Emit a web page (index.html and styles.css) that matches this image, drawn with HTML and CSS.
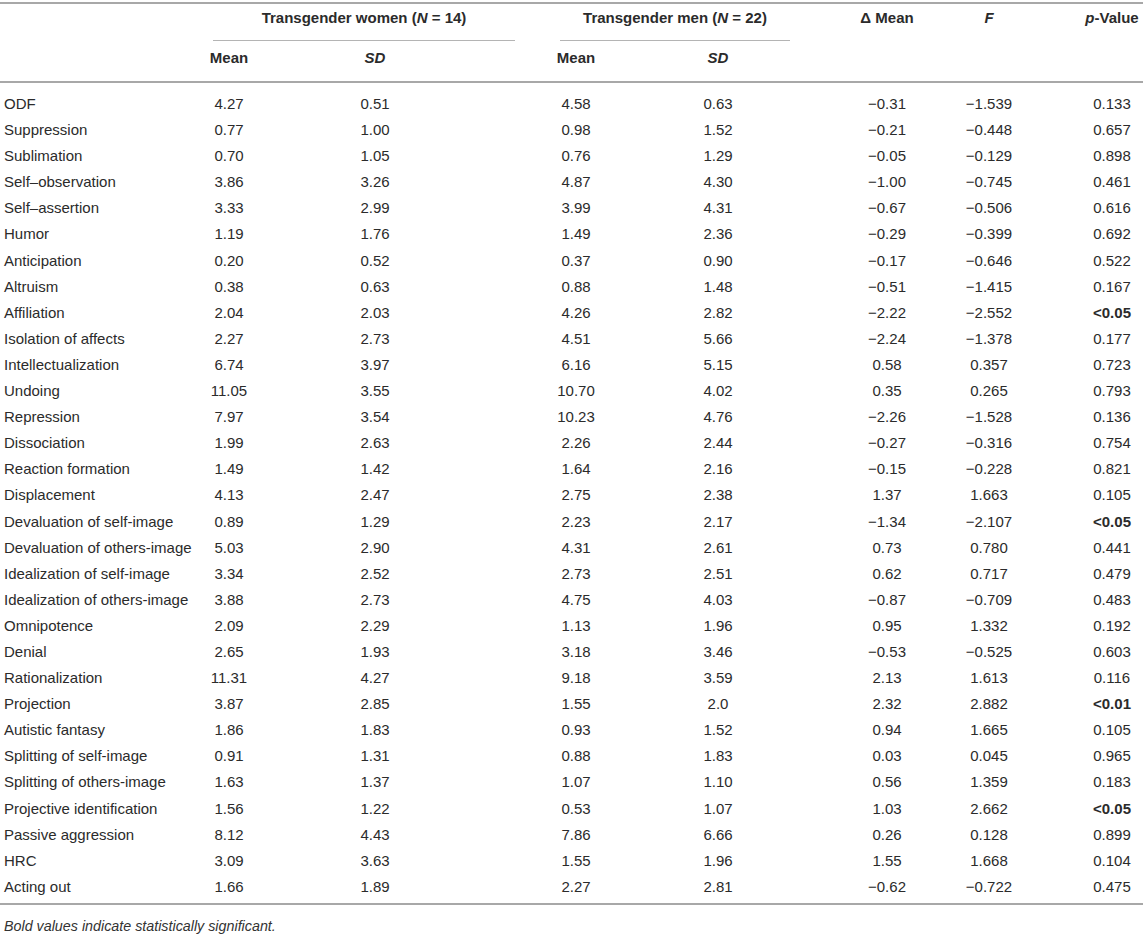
FILE: index.html
```html
<!DOCTYPE html>
<html lang="en">
<head>
<meta charset="utf-8">
<title>Defense mechanisms table</title>
<link rel="stylesheet" href="styles.css">
</head>
<body>
<div class="table">
  <div class="row head1">
    <div class="cell label"></div>
    <div class="cell grp grp-w">Transgender women (<i>N</i> = 14)</div>
    <div class="cell grp grp-m">Transgender men (<i>N</i> = 22)</div>
    <div class="cell c6">Δ Mean</div>
    <div class="cell c7"><i>F</i></div>
    <div class="cell c8"><i>p</i>-Value</div>
  </div>
  <div class="row head2">
    <div class="cell label"></div>
    <div class="cell c2">Mean</div>
    <div class="cell c3"><i>SD</i></div>
    <div class="cell c4">Mean</div>
    <div class="cell c5"><i>SD</i></div>
    <div class="cell c6"></div>
    <div class="cell c7"></div>
    <div class="cell c8"></div>
  </div>
  <div class="body">
    <div class="row"><div class="cell label">ODF</div><div class="cell c2">4.27</div><div class="cell c3">0.51</div><div class="cell c4">4.58</div><div class="cell c5">0.63</div><div class="cell c6">−0.31</div><div class="cell c7">−1.539</div><div class="cell c8">0.133</div></div>
    <div class="row"><div class="cell label">Suppression</div><div class="cell c2">0.77</div><div class="cell c3">1.00</div><div class="cell c4">0.98</div><div class="cell c5">1.52</div><div class="cell c6">−0.21</div><div class="cell c7">−0.448</div><div class="cell c8">0.657</div></div>
    <div class="row"><div class="cell label">Sublimation</div><div class="cell c2">0.70</div><div class="cell c3">1.05</div><div class="cell c4">0.76</div><div class="cell c5">1.29</div><div class="cell c6">−0.05</div><div class="cell c7">−0.129</div><div class="cell c8">0.898</div></div>
    <div class="row"><div class="cell label">Self–observation</div><div class="cell c2">3.86</div><div class="cell c3">3.26</div><div class="cell c4">4.87</div><div class="cell c5">4.30</div><div class="cell c6">−1.00</div><div class="cell c7">−0.745</div><div class="cell c8">0.461</div></div>
    <div class="row"><div class="cell label">Self–assertion</div><div class="cell c2">3.33</div><div class="cell c3">2.99</div><div class="cell c4">3.99</div><div class="cell c5">4.31</div><div class="cell c6">−0.67</div><div class="cell c7">−0.506</div><div class="cell c8">0.616</div></div>
    <div class="row"><div class="cell label">Humor</div><div class="cell c2">1.19</div><div class="cell c3">1.76</div><div class="cell c4">1.49</div><div class="cell c5">2.36</div><div class="cell c6">−0.29</div><div class="cell c7">−0.399</div><div class="cell c8">0.692</div></div>
    <div class="row"><div class="cell label">Anticipation</div><div class="cell c2">0.20</div><div class="cell c3">0.52</div><div class="cell c4">0.37</div><div class="cell c5">0.90</div><div class="cell c6">−0.17</div><div class="cell c7">−0.646</div><div class="cell c8">0.522</div></div>
    <div class="row"><div class="cell label">Altruism</div><div class="cell c2">0.38</div><div class="cell c3">0.63</div><div class="cell c4">0.88</div><div class="cell c5">1.48</div><div class="cell c6">−0.51</div><div class="cell c7">−1.415</div><div class="cell c8">0.167</div></div>
    <div class="row"><div class="cell label">Affiliation</div><div class="cell c2">2.04</div><div class="cell c3">2.03</div><div class="cell c4">4.26</div><div class="cell c5">2.82</div><div class="cell c6">−2.22</div><div class="cell c7">−2.552</div><div class="cell c8"><b>&lt;0.05</b></div></div>
    <div class="row"><div class="cell label">Isolation of affects</div><div class="cell c2">2.27</div><div class="cell c3">2.73</div><div class="cell c4">4.51</div><div class="cell c5">5.66</div><div class="cell c6">−2.24</div><div class="cell c7">−1.378</div><div class="cell c8">0.177</div></div>
    <div class="row"><div class="cell label">Intellectualization</div><div class="cell c2">6.74</div><div class="cell c3">3.97</div><div class="cell c4">6.16</div><div class="cell c5">5.15</div><div class="cell c6">0.58</div><div class="cell c7">0.357</div><div class="cell c8">0.723</div></div>
    <div class="row"><div class="cell label">Undoing</div><div class="cell c2">11.05</div><div class="cell c3">3.55</div><div class="cell c4">10.70</div><div class="cell c5">4.02</div><div class="cell c6">0.35</div><div class="cell c7">0.265</div><div class="cell c8">0.793</div></div>
    <div class="row"><div class="cell label">Repression</div><div class="cell c2">7.97</div><div class="cell c3">3.54</div><div class="cell c4">10.23</div><div class="cell c5">4.76</div><div class="cell c6">−2.26</div><div class="cell c7">−1.528</div><div class="cell c8">0.136</div></div>
    <div class="row"><div class="cell label">Dissociation</div><div class="cell c2">1.99</div><div class="cell c3">2.63</div><div class="cell c4">2.26</div><div class="cell c5">2.44</div><div class="cell c6">−0.27</div><div class="cell c7">−0.316</div><div class="cell c8">0.754</div></div>
    <div class="row"><div class="cell label">Reaction formation</div><div class="cell c2">1.49</div><div class="cell c3">1.42</div><div class="cell c4">1.64</div><div class="cell c5">2.16</div><div class="cell c6">−0.15</div><div class="cell c7">−0.228</div><div class="cell c8">0.821</div></div>
    <div class="row"><div class="cell label">Displacement</div><div class="cell c2">4.13</div><div class="cell c3">2.47</div><div class="cell c4">2.75</div><div class="cell c5">2.38</div><div class="cell c6">1.37</div><div class="cell c7">1.663</div><div class="cell c8">0.105</div></div>
    <div class="row"><div class="cell label">Devaluation of self-image</div><div class="cell c2">0.89</div><div class="cell c3">1.29</div><div class="cell c4">2.23</div><div class="cell c5">2.17</div><div class="cell c6">−1.34</div><div class="cell c7">−2.107</div><div class="cell c8"><b>&lt;0.05</b></div></div>
    <div class="row"><div class="cell label">Devaluation of others-image</div><div class="cell c2">5.03</div><div class="cell c3">2.90</div><div class="cell c4">4.31</div><div class="cell c5">2.61</div><div class="cell c6">0.73</div><div class="cell c7">0.780</div><div class="cell c8">0.441</div></div>
    <div class="row"><div class="cell label">Idealization of self-image</div><div class="cell c2">3.34</div><div class="cell c3">2.52</div><div class="cell c4">2.73</div><div class="cell c5">2.51</div><div class="cell c6">0.62</div><div class="cell c7">0.717</div><div class="cell c8">0.479</div></div>
    <div class="row"><div class="cell label">Idealization of others-image</div><div class="cell c2">3.88</div><div class="cell c3">2.73</div><div class="cell c4">4.75</div><div class="cell c5">4.03</div><div class="cell c6">−0.87</div><div class="cell c7">−0.709</div><div class="cell c8">0.483</div></div>
    <div class="row"><div class="cell label">Omnipotence</div><div class="cell c2">2.09</div><div class="cell c3">2.29</div><div class="cell c4">1.13</div><div class="cell c5">1.96</div><div class="cell c6">0.95</div><div class="cell c7">1.332</div><div class="cell c8">0.192</div></div>
    <div class="row"><div class="cell label">Denial</div><div class="cell c2">2.65</div><div class="cell c3">1.93</div><div class="cell c4">3.18</div><div class="cell c5">3.46</div><div class="cell c6">−0.53</div><div class="cell c7">−0.525</div><div class="cell c8">0.603</div></div>
    <div class="row"><div class="cell label">Rationalization</div><div class="cell c2">11.31</div><div class="cell c3">4.27</div><div class="cell c4">9.18</div><div class="cell c5">3.59</div><div class="cell c6">2.13</div><div class="cell c7">1.613</div><div class="cell c8">0.116</div></div>
    <div class="row"><div class="cell label">Projection</div><div class="cell c2">3.87</div><div class="cell c3">2.85</div><div class="cell c4">1.55</div><div class="cell c5">2.0</div><div class="cell c6">2.32</div><div class="cell c7">2.882</div><div class="cell c8"><b>&lt;0.01</b></div></div>
    <div class="row"><div class="cell label">Autistic fantasy</div><div class="cell c2">1.86</div><div class="cell c3">1.83</div><div class="cell c4">0.93</div><div class="cell c5">1.52</div><div class="cell c6">0.94</div><div class="cell c7">1.665</div><div class="cell c8">0.105</div></div>
    <div class="row"><div class="cell label">Splitting of self-image</div><div class="cell c2">0.91</div><div class="cell c3">1.31</div><div class="cell c4">0.88</div><div class="cell c5">1.83</div><div class="cell c6">0.03</div><div class="cell c7">0.045</div><div class="cell c8">0.965</div></div>
    <div class="row"><div class="cell label">Splitting of others-image</div><div class="cell c2">1.63</div><div class="cell c3">1.37</div><div class="cell c4">1.07</div><div class="cell c5">1.10</div><div class="cell c6">0.56</div><div class="cell c7">1.359</div><div class="cell c8">0.183</div></div>
    <div class="row"><div class="cell label">Projective identification</div><div class="cell c2">1.56</div><div class="cell c3">1.22</div><div class="cell c4">0.53</div><div class="cell c5">1.07</div><div class="cell c6">1.03</div><div class="cell c7">2.662</div><div class="cell c8"><b>&lt;0.05</b></div></div>
    <div class="row"><div class="cell label">Passive aggression</div><div class="cell c2">8.12</div><div class="cell c3">4.43</div><div class="cell c4">7.86</div><div class="cell c5">6.66</div><div class="cell c6">0.26</div><div class="cell c7">0.128</div><div class="cell c8">0.899</div></div>
    <div class="row"><div class="cell label">HRC</div><div class="cell c2">3.09</div><div class="cell c3">3.63</div><div class="cell c4">1.55</div><div class="cell c5">1.96</div><div class="cell c6">1.55</div><div class="cell c7">1.668</div><div class="cell c8">0.104</div></div>
    <div class="row"><div class="cell label">Acting out</div><div class="cell c2">1.66</div><div class="cell c3">1.89</div><div class="cell c4">2.27</div><div class="cell c5">2.81</div><div class="cell c6">−0.62</div><div class="cell c7">−0.722</div><div class="cell c8">0.475</div></div>
  </div>
</div>
<p class="note">Bold values indicate statistically significant.</p>
</body>
</html>
```
FILE: styles.css
```css
html, body {
  margin: 0;
  padding: 0;
  background: #ffffff;
}
body {
  padding-top: 2px;
  font-family: "Liberation Sans", Arial, Helvetica, sans-serif;
  font-size: 15px;
  color: #2b2b2b;
  width: 1143px;
}
.table {
  border-top: 2px solid #a8a8a8;
  border-bottom: 2px solid #a8a8a8;
}
.row {
  display: grid;
  grid-template-columns: 199px 60px 232px 170px 114px 165px 98px 105px;
}
.cell {
  text-align: center;
  white-space: nowrap;
}
.label {
  text-align: left;
  padding-left: 4px;
}
.c6 { padding-left: 59px; }
.c8 { padding-left: 43px; }

.head1 .cell,
.head2 .cell {
  font-weight: bold;
  line-height: 18px;
}
.head1 .cell {
  padding-top: 5px;
  padding-bottom: 13px;
}
.grp {
  border-bottom: 1px solid #b4b4b4;
}
.grp-w {
  grid-column: 2 / span 2;
  margin-left: 14px;
  margin-right: -24px;
}
.grp-m {
  grid-column: 4 / span 2;
  margin-left: 69px;
  margin-right: -15px;
}
.head2 {
  border-bottom: 2px solid #a8a8a8;
}
.head2 .cell {
  padding-top: 8px;
  padding-bottom: 14px;
}
.body {
  padding-top: 8px;
  padding-bottom: 3px;
}
.body .cell {
  line-height: 26.1px;
}
.note {
  margin: 13px 0 0 0;
  padding-left: 4px;
  font-style: italic;
  font-size: 14.3px;
  line-height: 16px;
  color: #333333;
}
```
